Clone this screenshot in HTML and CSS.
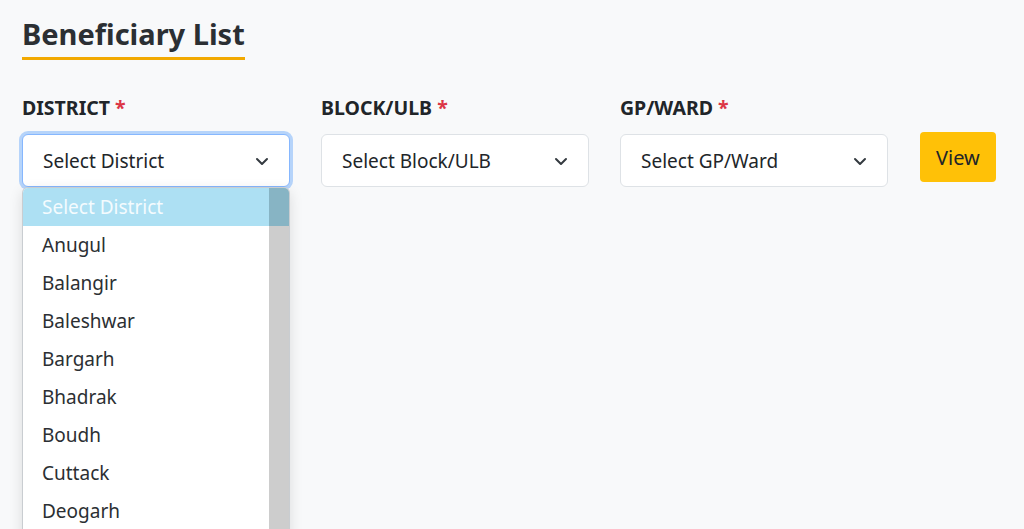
FILE: index.html
```html
<!DOCTYPE html>
<html lang="en">
<head>
    <meta charset="UTF-8">
    <meta name="viewport" content="width=device-width, initial-scale=1.0">
    <title>Beneficiary List</title>
    <link rel="stylesheet" href="styles.css">
</head>
<body>
    <div class="page">
        <h2 class="page-title">Beneficiary List</h2>

        <div class="filters">
            <div class="field">
                <label class="field-label">DISTRICT <span class="req">*</span></label>
                <div class="select-box is-open">
                    <span>Select District</span>
                    <svg class="chevron" viewBox="0 0 16 16"><path d="M3 6l5 5 5-5"/></svg>
                </div>
                <!-- open native list of the district select -->
                <div class="dropdown">
                    <ul class="dropdown-list">
                        <li class="active">Select District</li>
                        <li>Anugul</li>
                        <li>Balangir</li>
                        <li>Baleshwar</li>
                        <li>Bargarh</li>
                        <li>Bhadrak</li>
                        <li>Boudh</li>
                        <li>Cuttack</li>
                        <li>Deogarh</li>
                    </ul>
                    <div class="scrollbar"><div class="scroll-thumb"></div></div>
                </div>
            </div>

            <div class="field">
                <label class="field-label">BLOCK/ULB <span class="req">*</span></label>
                <div class="select-box">
                    <span>Select Block/ULB</span>
                    <svg class="chevron" viewBox="0 0 16 16"><path d="M3 6l5 5 5-5"/></svg>
                </div>
            </div>

            <div class="field">
                <label class="field-label">GP/WARD <span class="req">*</span></label>
                <div class="select-box">
                    <span>Select GP/Ward</span>
                    <svg class="chevron" viewBox="0 0 16 16"><path d="M3 6l5 5 5-5"/></svg>
                </div>
            </div>

            <button type="button" class="btn-view">View</button>
        </div>
    </div>
</body>
</html>
```

FILE: styles.css
```css
html, body {
    height: 100%;
}
body {
    margin: 0;
    background-color: #f8f9fa;
    font-family: "Noto Sans", "Open Sans", sans-serif;
    color: #212529;
    overflow: hidden;
}
.page {
    padding: 16px 22px 0 22px;
}
.page-title {
    display: inline-block;
    margin: 0;
    font-size: 29px;
    font-weight: 700;
    line-height: 36px;
    color: #2b2f33;
    padding-bottom: 5px;
    border-bottom: 3px solid #f2a900;
}
.filters {
    display: flex;
    align-items: flex-start;
    gap: 31px;
    margin-top: 35px;
}
.field {
    width: 268px;
}
.field-label {
    display: block;
    font-size: 19.5px;
    font-weight: 700;
    line-height: 26px;
    margin-bottom: 13px;
    color: #212529;
}
.req {
    color: #dc3545;
}
.select-box {
    display: flex;
    align-items: center;
    justify-content: space-between;
    height: 51px;
    padding: 0 19px 0 20px;
    background-color: #fff;
    border: 1px solid #dee2e6;
    border-radius: 6px;
    font-size: 19px;
    color: #212529;
}
.select-box.is-open {
    border-color: #86b7fe;
    box-shadow: 0 0 0 3px #b6d4fa;
}
.chevron {
    width: 16px;
    height: 16px;
    fill: none;
    stroke: #343a40;
    stroke-width: 2;
    stroke-linecap: round;
    stroke-linejoin: round;
}
.dropdown {
    display: flex;
    height: 400px;
    background-color: #fff;
    border: 1px solid #c9cdd1;
    border-bottom: none;
    border-radius: 6px 6px 0 0;
    box-shadow: 0 4px 14px rgba(0, 0, 0, 0.12);
    overflow: hidden;
}
.dropdown-list {
    list-style: none;
    margin: 0;
    padding: 0;
    flex: 1;
}
.dropdown-list li {
    height: 38px;
    line-height: 38px;
    padding-left: 19px;
    font-size: 19px;
    color: #2b2f33;
}
.dropdown-list li.active {
    background-color: #ade0f3;
    color: #f4fbfe;
}
.scrollbar {
    width: 20px;
    background-color: #cdcdcd;
}
.scroll-thumb {
    height: 38px;
    background-color: #87b4c4;
}
.btn-view {
    height: 50px;
    margin-top: 37px;
    margin-left: 1px;
    padding: 0 16px;
    background-color: #ffc107;
    border: none;
    border-radius: 4px;
    font-family: inherit;
    font-size: 20px;
    color: #212529;
    cursor: pointer;
}
```
